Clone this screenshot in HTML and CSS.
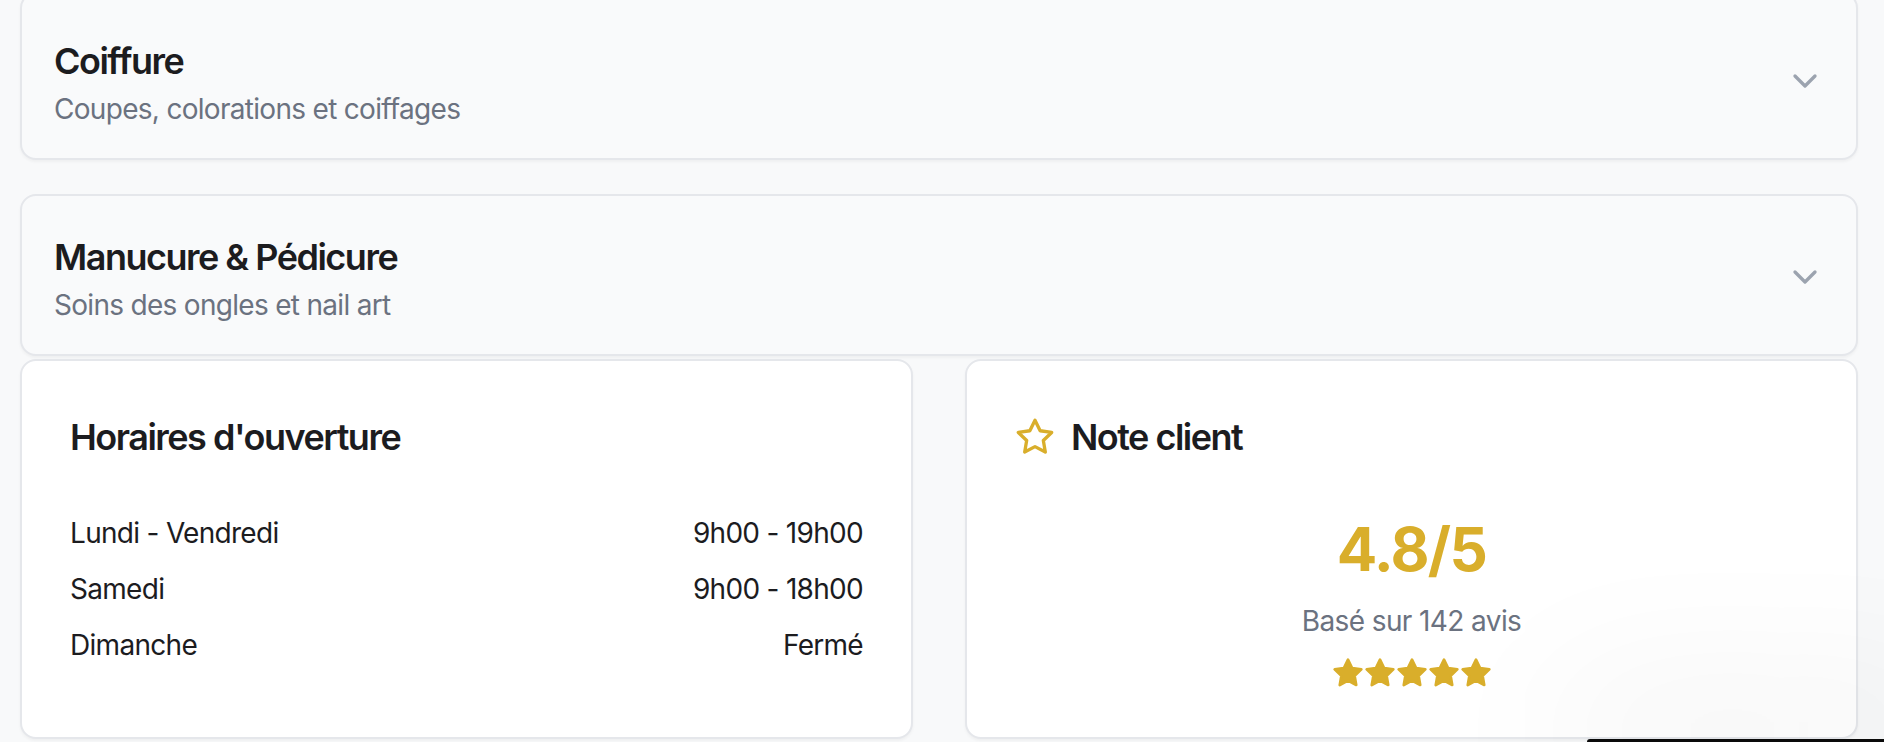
FILE: index.html
```html
<!DOCTYPE html>
<html lang="fr">
<head>
<meta charset="utf-8">
<title>Salon</title>
<link rel="stylesheet" href="styles.css">
</head>
<body>
<main class="page">
  <div class="accordion">
    <div class="acc-item acc-first">
      <div class="acc-text">
        <h3 class="acc-title">Coiffure</h3>
        <p class="acc-sub">Coupes, colorations et coiffages</p>
      </div>
      <svg class="chevron" viewBox="0 0 24 24" fill="none" stroke="currentColor" stroke-width="2" stroke-linecap="round" stroke-linejoin="round"><path d="m6 9 6 6 6-6"/></svg>
    </div>
    <div class="acc-item">
      <div class="acc-text">
        <h3 class="acc-title">Manucure &amp; Pédicure</h3>
        <p class="acc-sub">Soins des ongles et nail art</p>
      </div>
      <svg class="chevron" viewBox="0 0 24 24" fill="none" stroke="currentColor" stroke-width="2" stroke-linecap="round" stroke-linejoin="round"><path d="m6 9 6 6 6-6"/></svg>
    </div>
  </div>

  <div class="info-grid">
    <section class="card">
      <h2 class="card-title">Horaires d'ouverture</h2>
      <ul class="hours">
        <li class="hours-row"><span>Lundi - Vendredi</span><span>9h00 - 19h00</span></li>
        <li class="hours-row"><span>Samedi</span><span>9h00 - 18h00</span></li>
        <li class="hours-row"><span>Dimanche</span><span>Fermé</span></li>
      </ul>
    </section>
    <section class="card">
      <h2 class="card-title with-icon">
        <svg class="title-star" viewBox="0 0 24 24" fill="none" stroke="currentColor" stroke-width="2" stroke-linecap="round" stroke-linejoin="round"><polygon points="12 2 15.09 8.26 22 9.27 17 14.14 18.18 21.02 12 17.77 5.82 21.02 7 14.14 2 9.27 8.91 8.26 12 2"/></svg>
        Note client
      </h2>
      <div class="rating">
        <div class="rating-score">4.8/5</div>
        <div class="rating-count">Basé sur 142 avis</div>
        <div class="rating-stars">
          <svg viewBox="0 0 24 24" fill="currentColor" stroke="currentColor" stroke-width="2" stroke-linejoin="round"><polygon points="12 2 15.09 8.26 22 9.27 17 14.14 18.18 21.02 12 17.77 5.82 21.02 7 14.14 2 9.27 8.91 8.26 12 2"/></svg>
          <svg viewBox="0 0 24 24" fill="currentColor" stroke="currentColor" stroke-width="2" stroke-linejoin="round"><polygon points="12 2 15.09 8.26 22 9.27 17 14.14 18.18 21.02 12 17.77 5.82 21.02 7 14.14 2 9.27 8.91 8.26 12 2"/></svg>
          <svg viewBox="0 0 24 24" fill="currentColor" stroke="currentColor" stroke-width="2" stroke-linejoin="round"><polygon points="12 2 15.09 8.26 22 9.27 17 14.14 18.18 21.02 12 17.77 5.82 21.02 7 14.14 2 9.27 8.91 8.26 12 2"/></svg>
          <svg viewBox="0 0 24 24" fill="currentColor" stroke="currentColor" stroke-width="2" stroke-linejoin="round"><polygon points="12 2 15.09 8.26 22 9.27 17 14.14 18.18 21.02 12 17.77 5.82 21.02 7 14.14 2 9.27 8.91 8.26 12 2"/></svg>
          <svg viewBox="0 0 24 24" fill="currentColor" stroke="currentColor" stroke-width="2" stroke-linejoin="round"><polygon points="12 2 15.09 8.26 22 9.27 17 14.14 18.18 21.02 12 17.77 5.82 21.02 7 14.14 2 9.27 8.91 8.26 12 2"/></svg>
        </div>
      </div>
    </section>
  </div>
  <div class="floating-bar"></div>
</main>
</body>
</html>
```

FILE: styles.css
```css
* { box-sizing: border-box; }

html, body {
  margin: 0;
  padding: 0;
  height: 742px;
  overflow: hidden;
  background: #f8f9fa;
  font-family: Inter, "Noto Sans", "Liberation Sans", sans-serif;
  color: #1c1c1f;
}

.page {
  position: relative;
  height: 742px;
  overflow: hidden;
  padding: 0 26px 0 20px;
}

.accordion {
  display: flex;
  flex-direction: column;
  gap: 34px;
  margin-top: -8px;
}

.acc-item {
  display: flex;
  align-items: center;
  justify-content: space-between;
  height: 162px;
  padding: 4px 31px 0 32px;
  background: #f9fafb;
  border: 2px solid #e5e7eb;
  border-radius: 16px;
  box-shadow: 0 2px 3px rgba(0, 0, 0, 0.04);
}

.acc-item.acc-first {
  height: 168px;
  padding-top: 10px;
}

.acc-title {
  margin: 0;
  font-size: 36px;
  line-height: 56px;
  font-weight: 600;
  letter-spacing: -1.5px;
}

.acc-sub {
  margin: 0;
  font-size: 28px;
  line-height: 40px;
  color: #6b7280;
  letter-spacing: -0.7px;
}

.chevron {
  width: 40px;
  height: 40px;
  color: #9ca3af;
  flex-shrink: 0;
}

.info-grid {
  display: grid;
  grid-template-columns: 1fr 1fr;
  gap: 52px;
  margin-top: 3px;
  height: 376px;
}

.card {
  background: #ffffff;
  border: 2px solid #e5e7eb;
  border-radius: 16px;
  padding: 48px;
  box-shadow: 0 2px 3px rgba(0, 0, 0, 0.04);
}

.card-title {
  margin: 0 0 48px;
  font-size: 36px;
  line-height: 56px;
  font-weight: 600;
  letter-spacing: -1.5px;
}

.card-title.with-icon {
  display: flex;
  align-items: center;
  gap: 16px;
}

.title-star {
  width: 40px;
  height: 40px;
  color: #d9ae2b;
  flex-shrink: 0;
}

.hours {
  list-style: none;
  margin: 0;
  padding: 0;
  display: flex;
  flex-direction: column;
  gap: 16px;
}

.hours-row {
  display: flex;
  justify-content: space-between;
  font-size: 28px;
  line-height: 40px;
  letter-spacing: -0.7px;
}

.rating {
  display: flex;
  flex-direction: column;
  align-items: center;
}

.rating-score {
  font-size: 60px;
  line-height: 72px;
  font-weight: 700;
  color: #d9ae2b;
  letter-spacing: -1.6px;
}

.rating-count {
  margin-top: 16px;
  font-size: 28px;
  line-height: 40px;
  color: #6b7280;
  letter-spacing: -0.6px;
}

.rating-stars {
  display: flex;
  margin-top: 16px;
  color: #d9ae2b;
}

.rating-stars svg {
  width: 32px;
  height: 32px;
}

.floating-bar {
  position: absolute;
  left: 1587px;
  top: 739px;
  width: 340px;
  height: 3px;
  background: #0a0a0a;
  border-top-left-radius: 3px;
  box-shadow: 0 -10px 160px 30px rgba(0, 0, 0, 0.08);
}
```
